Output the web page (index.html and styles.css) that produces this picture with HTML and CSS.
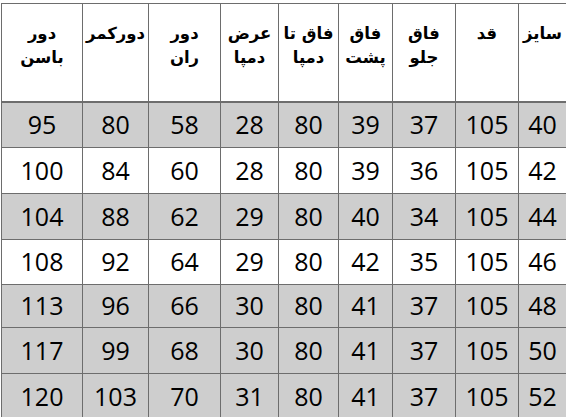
FILE: index.html
```html
<!DOCTYPE html>
<html lang="fa">
<head>
<meta charset="utf-8">
<link rel="stylesheet" href="styles.css">
</head>
<body>
<div class="sheet">
  <div class="h">سایز</div>
  <div class="h">قد</div>
  <div class="h">فاق<br>جلو</div>
  <div class="h">فاق<br>پشت</div>
  <div class="h">فاق تا<br>دمپا</div>
  <div class="h">عرض<br>دمپا</div>
  <div class="h">دور<br>ران</div>
  <div class="h">دورکمر</div>
  <div class="h">دور<br>باسن</div>

  <div class="c g">40</div><div class="c g">105</div><div class="c g">37</div><div class="c g">39</div><div class="c g">80</div><div class="c g">28</div><div class="c g">58</div><div class="c g">80</div><div class="c g">95</div>
  <div class="c">42</div><div class="c">105</div><div class="c">36</div><div class="c">39</div><div class="c">80</div><div class="c">28</div><div class="c">60</div><div class="c">84</div><div class="c">100</div>
  <div class="c g">44</div><div class="c g">105</div><div class="c g">34</div><div class="c g">40</div><div class="c g">80</div><div class="c g">29</div><div class="c g">62</div><div class="c g">88</div><div class="c g">104</div>
  <div class="c">46</div><div class="c">105</div><div class="c">35</div><div class="c">42</div><div class="c">80</div><div class="c">29</div><div class="c">64</div><div class="c">92</div><div class="c">108</div>
  <div class="c g">48</div><div class="c g">105</div><div class="c g">37</div><div class="c g">41</div><div class="c g">80</div><div class="c g">30</div><div class="c g">66</div><div class="c g">96</div><div class="c g">113</div>
  <div class="c g">50</div><div class="c g">105</div><div class="c g">37</div><div class="c g">41</div><div class="c g">80</div><div class="c g">30</div><div class="c g">68</div><div class="c g">99</div><div class="c g">117</div>
  <div class="c g">52</div><div class="c g">105</div><div class="c g">37</div><div class="c g">41</div><div class="c g">80</div><div class="c g">31</div><div class="c g">70</div><div class="c g">103</div><div class="c g">120</div>
</div>
</body>
</html>
```
FILE: styles.css
```css
html, body {
  margin: 0;
  padding: 0;
  background: #ffffff;
  overflow: hidden;
}
body {
  width: 566px;
  height: 417px;
}
.sheet {
  direction: rtl;
  margin: 3px 0 0 1px;
  width: 565px;
  box-sizing: border-box;
  display: grid;
  grid-template-columns: 47px 62px 62px 53px 59px 57px 71px 65px 80px;
  grid-template-rows: 98px 44px 45px 45px 44px 42px 45px 45px;
  gap: 1px;
  padding: 1px 0 1px 1px;
  background: #6d6d6d;
}
.h {
  background: #ffffff;
  border-bottom: 1px solid #6d6d6d;
  box-sizing: border-box;
  font-family: "DejaVu Sans", sans-serif;
  font-weight: bold;
  font-size: 16.5px;
  line-height: 24px;
  padding-top: 18px;
  text-align: center;
  color: #000;
}
.c {
  background: #ffffff;
  font-family: "Open Sans", sans-serif;
  font-size: 25px;
  color: #000;
  display: flex;
  align-items: center;
  justify-content: center;
  padding-bottom: 2px;
  box-sizing: border-box;
  direction: ltr;
}
.c.g {
  background: #cecece;
}
```
